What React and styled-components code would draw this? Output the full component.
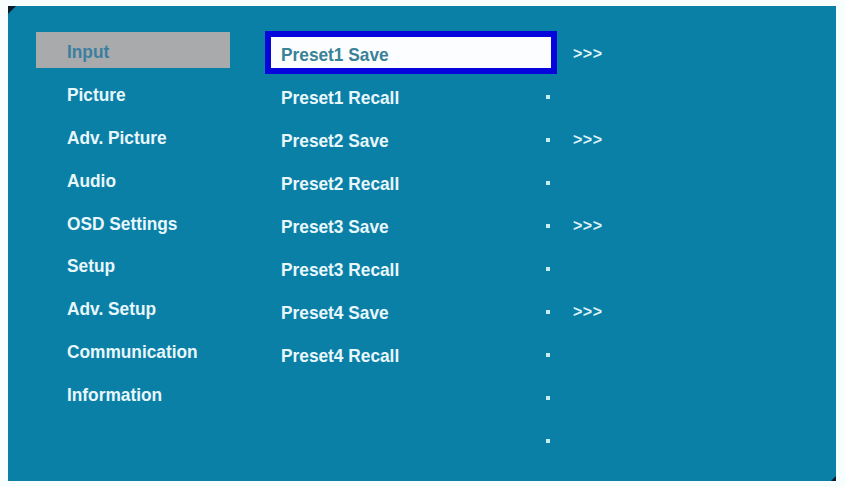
import React from "react";
import styled, { createGlobalStyle } from "styled-components";

const Global = createGlobalStyle`
  html, body { margin: 0; padding: 0; background: #f8fdfe; }
  body { font-family: "Liberation Sans", Arial, sans-serif; }
`;

const Screen = styled.div`
  position: relative;
  box-sizing: border-box;
  width: 828px;
  height: 475px;
  margin: 6px 9px 6px 8px;
  padding: 25px 0 0 28px;
  background: #0b80a6;
  display: flex;
  align-items: flex-start;

  &::before {
    content: "";
    position: absolute;
    left: 0;
    top: 0;
    border-top: 8px solid #0c1a2a;
    border-right: 8px solid transparent;
  }
  &::after {
    content: "";
    position: absolute;
    right: 0;
    bottom: 0;
    border-bottom: 5px solid #0c1a2a;
    border-left: 5px solid transparent;
  }
`;

const MainMenu = styled.div`
  width: 194px;
  margin-top: 1px;
  display: flex;
  flex-direction: column;
`;

const MenuItem = styled.div`
  box-sizing: border-box;
  height: 36px;
  margin-bottom: 6.9px;
  padding: 3px 0 0 31px;
  display: flex;
  align-items: center;
  background: ${(p) => (p.$active ? "#a8aaab" : "transparent")};
  color: ${(p) => (p.$active ? "#3b7fa0" : "#e8f7fb")};
`;

const Label = styled.span`
  display: inline-block;
  font-weight: bold;
  font-size: 19px;
  line-height: 1;
  white-space: nowrap;
  transform: scaleX(0.91);
  transform-origin: left center;
`;

const Options = styled.div`
  width: 292px;
  margin-left: 35px;
  display: flex;
  flex-direction: column;
`;

const OptionRow = styled.div`
  box-sizing: border-box;
  height: 43px;
  padding: 3px 0 0 10px;
  display: flex;
  align-items: center;
  border: 6px solid ${(p) => (p.$selected ? "#0606dc" : "transparent")};
  background: ${(p) => (p.$selected ? "#fbfdff" : "transparent")};
  color: ${(p) => (p.$selected ? "#3a8296" : "#e8f7fb")};
`;

const Dot = styled.span`
  width: 4px;
  height: 4px;
  margin-left: auto;
  margin-right: 1px;
  background: #c6ecf4;
`;

const ArrowCol = styled.div`
  margin-left: 16px;
  display: flex;
  flex-direction: column;
`;

const ArrowRow = styled.div`
  height: 43px;
  padding-top: 3px;
  box-sizing: border-box;
  display: flex;
  align-items: center;
  color: #dcf2f7;
  font-weight: bold;
  font-size: 16px;
  letter-spacing: 0.5px;
`;

const menu = [
  "Input",
  "Picture",
  "Adv. Picture",
  "Audio",
  "OSD Settings",
  "Setup",
  "Adv. Setup",
  "Communication",
  "Information",
];

const options = [
  "Preset1 Save",
  "Preset1 Recall",
  "Preset2 Save",
  "Preset2 Recall",
  "Preset3 Save",
  "Preset3 Recall",
  "Preset4 Save",
  "Preset4 Recall",
  "",
  "",
];

export default function App() {
  return (
    <>
      <Global />
      <Screen>
        <MainMenu>
          {menu.map((m, i) => (
            <MenuItem key={m} $active={i === 0}>
              <Label>{m}</Label>
            </MenuItem>
          ))}
        </MainMenu>
        <Options>
          {options.map((o, i) => (
            <OptionRow key={i} $selected={i === 0}>
              {o && <Label>{o}</Label>}
              {i > 0 && <Dot />}
            </OptionRow>
          ))}
        </Options>
        <ArrowCol>
          {options.slice(0, 7).map((o, i) => (
            <ArrowRow key={i}>{i % 2 === 0 ? ">>>" : ""}</ArrowRow>
          ))}
        </ArrowCol>
      </Screen>
    </>
  );
}
